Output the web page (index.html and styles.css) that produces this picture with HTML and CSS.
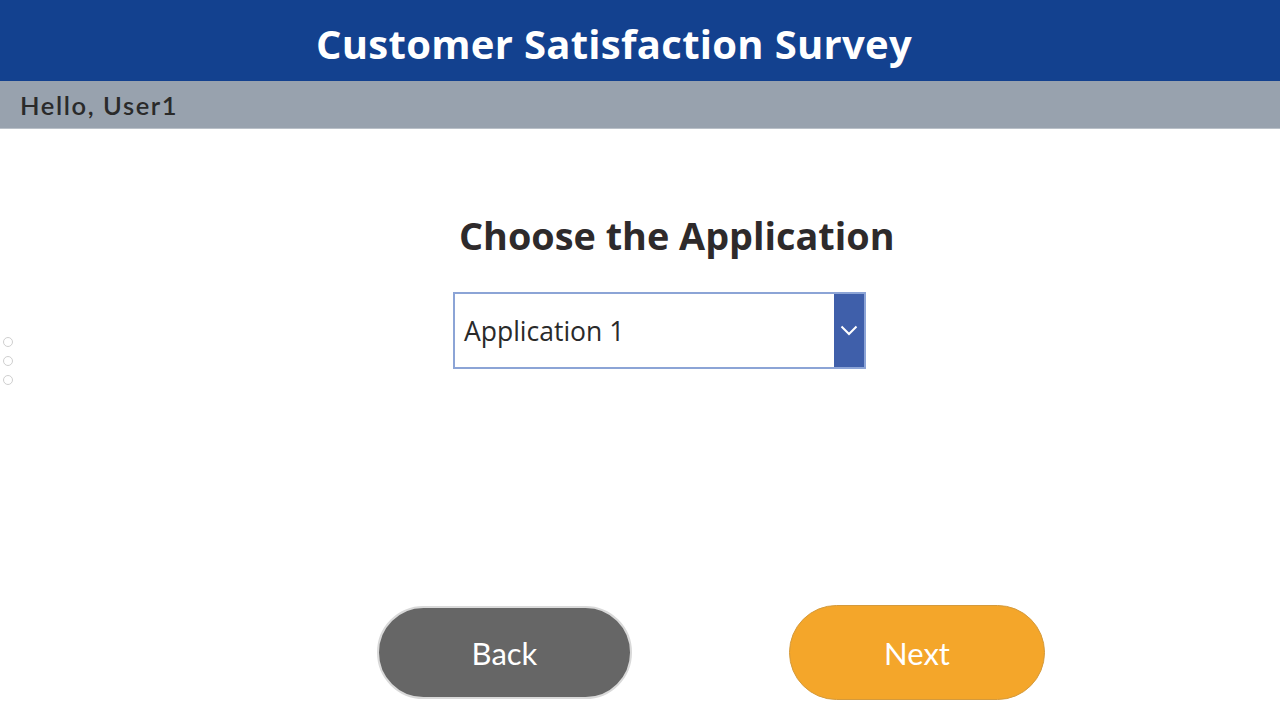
FILE: index.html
```html
<!DOCTYPE html>
<html>
<head>
<meta charset="utf-8">
<link rel="stylesheet" href="styles.css">
</head>
<body>
<header class="topbar"><h1 class="title">Customer Satisfaction Survey</h1></header>
<div class="greet">Hello, User1</div>
<main class="content">
  <h2 class="question">Choose the Application</h2>
  <div class="select">
    <span class="select-value">Application 1</span>
    <span class="select-btn">
      <svg width="18" height="11" viewBox="0 0 18 11"><path d="M1.5 1.5 L9 9 L16.5 1.5" fill="none" stroke="#fff" stroke-width="2"/></svg>
    </span>
  </div>
  <div class="actions">
    <button class="btn btn-back">Back</button>
    <button class="btn btn-next">Next</button>
  </div>
</main>
<div class="dots"><span></span><span></span><span></span></div>
</body>
</html>
```
FILE: styles.css
```css
html, body { margin: 0; padding: 0; background: #fff; }
body { width: 1280px; height: 720px; overflow: hidden; position: relative; font-family: "Open Sans", sans-serif; }
.topbar { height: 81px; background: #13418F; display: flex; align-items: center; justify-content: center; padding-right: 52px; padding-top: 6px; box-sizing: border-box; }
.title { margin: 0; color: #fff; font-family: "Open Sans", sans-serif; font-weight: 700; font-size: 40px; line-height: 1; letter-spacing: 0.3px; }
.greet { height: 48px; background: #98A2AE; border-bottom: 1px solid #b9c0c8; box-sizing: border-box; padding-left: 20px; display: flex; align-items: center; font-family: "Lato", sans-serif; font-weight: 600; font-size: 25.5px; letter-spacing: 1.6px; color: #2a2a2a; }
.content { display: flex; flex-direction: column; }
.question { margin: 86px 0 0 459px; font-family: "Open Sans", sans-serif; font-weight: 700; font-size: 37.8px; line-height: 42px; color: #2e2a2b; }
.select { margin: 35px 0 0 453px; width: 413px; height: 77px; box-sizing: border-box; border: 2px solid #8ca4d6; display: flex; align-items: stretch; background: #fff; }
.select-value { flex: 1; display: flex; align-items: center; padding-left: 9px; font-family: "Open Sans", sans-serif; font-size: 26.5px; color: #2a2a2a; }
.select-btn { width: 30px; background: #3F5FAA; display: flex; align-items: center; justify-content: center; }
.actions { display: flex; align-items: center; margin: 236px 0 0 377px; gap: 157px; }
.btn { font-family: "Lato", sans-serif; font-size: 31px; color: #fff; border-radius: 48px; cursor: pointer; padding: 0; }
.btn-back { width: 255px; height: 93px; background: #666666; border: 2px solid #d9d9d9; }
.btn-next { width: 256px; height: 95px; background: #F4A62A; border: 1px solid #d49a3c; }
.dots { position: absolute; left: 3px; top: 337px; display: flex; flex-direction: column; gap: 9px; }
.dots span { width: 10px; height: 10px; box-sizing: border-box; border: 1.5px solid #cfcfcf; border-radius: 50%; }
```
